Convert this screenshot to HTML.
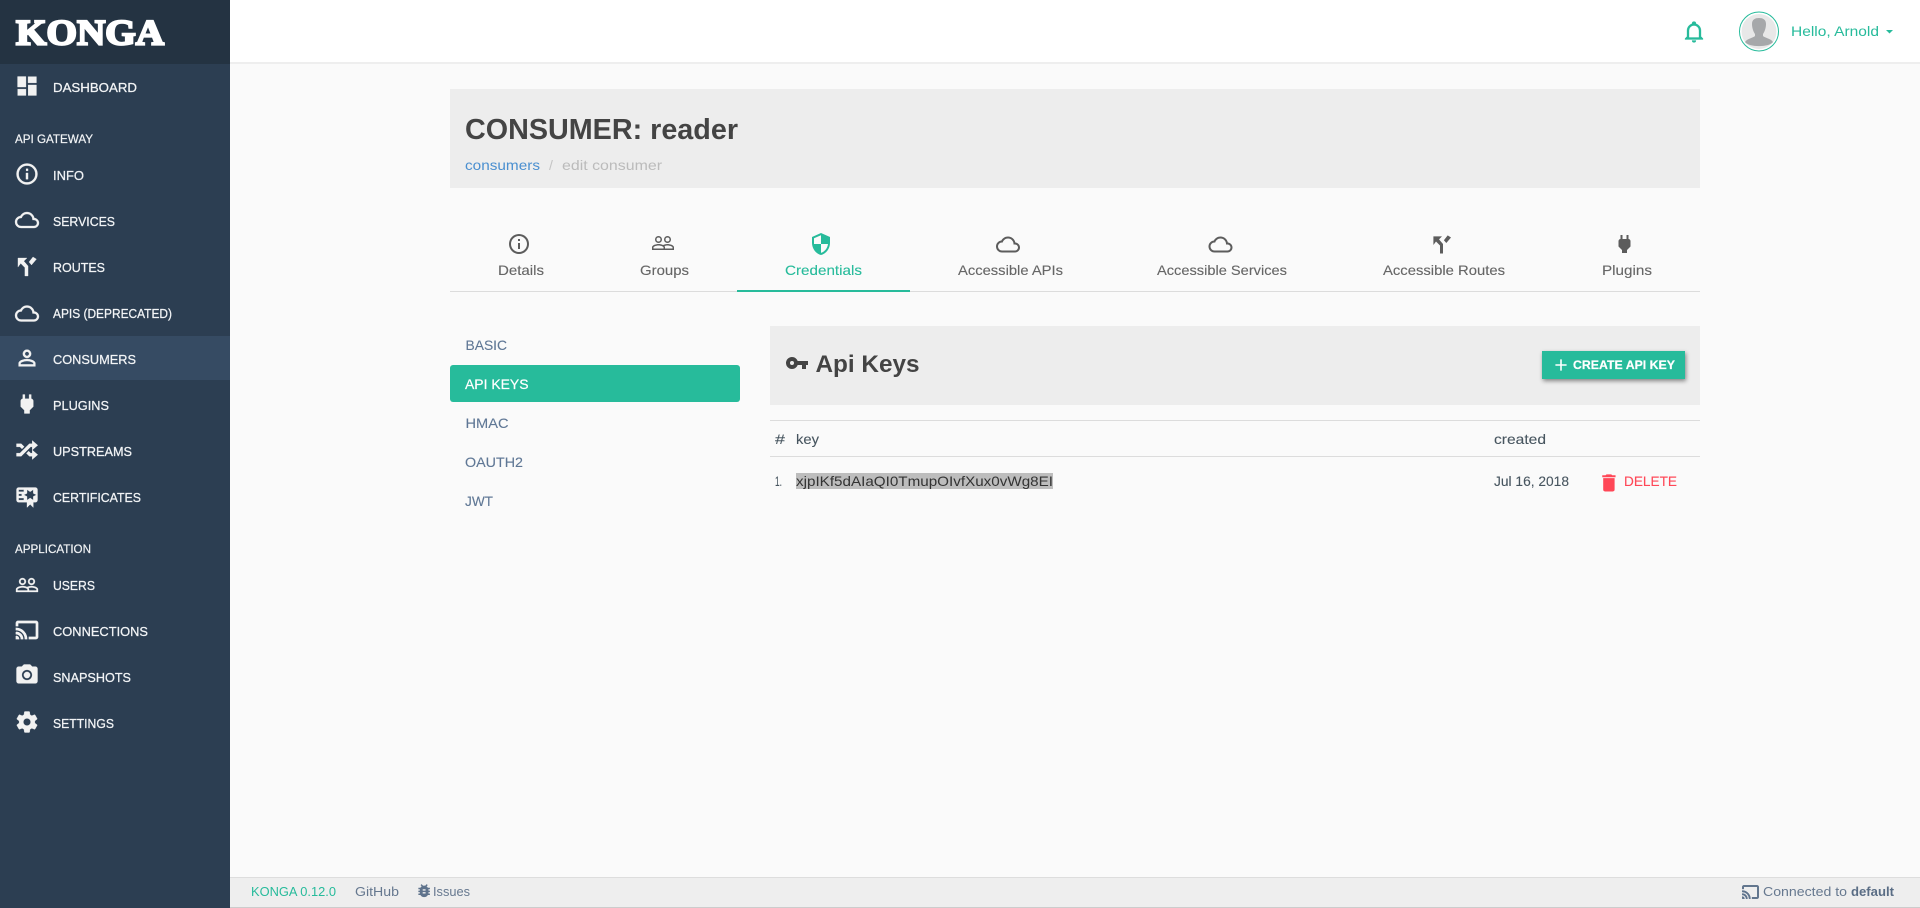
<!DOCTYPE html>
<html lang="en">
<head>
<meta charset="utf-8">
<title>Konga</title>
<style>
html,body{margin:0;padding:0;width:1920px;height:908px;overflow:hidden;background:#fafafa}
svg{display:block}
text{font-family:"Liberation Sans",sans-serif}
.nav{font-size:13px;fill:#f2f4f6;stroke:#f2f4f6;stroke-width:.25px}
.head{font-size:12px;fill:#f2f4f6;stroke:#f2f4f6;stroke-width:.2px}
.ni{fill:#f2f2f2;stroke:#f2f2f2;stroke-width:.3px}
.tab{font-size:14px;fill:#666;stroke:#666;stroke-width:.12px}
.ti{fill:#5c5c5c}
.side{font-size:14px;fill:#5f7795;stroke:#5f7795;stroke-width:.12px}
.td{font-size:14px;fill:#47555f;stroke:#47555f;stroke-width:.1px}
.foot{font-size:13px;fill:#66788f}
</style>
</head>
<body>
<svg xmlns="http://www.w3.org/2000/svg" width="1920" height="908" viewBox="0 0 1920 908">
<defs>
<path id="dash" d="M13,3V9H21V3M13,21H21V11H13M3,21H11V15H3M3,13H11V3H3V13Z"/>
<path id="info" d="M11,9H13V7H11M12,20C7.59,20 4,16.41 4,12C4,7.59 7.59,4 12,4C16.41,4 20,7.59 20,12C20,16.41 16.41,20 12,20M12,2A10,10 0 0,0 2,12A10,10 0 0,0 12,22A10,10 0 0,0 22,12A10,10 0 0,0 12,2M11,17H13V11H11V17Z"/>
<path id="cloud" d="M19,18H6A4,4 0 0,1 2,14A4,4 0 0,1 6,10H6.71C7.37,7.69 9.5,6 12,6A5.5,5.5 0 0,1 17.5,11.5V12H19A3,3 0 0,1 22,15A3,3 0 0,1 19,18M19.35,10.03C18.67,6.59 15.64,4 12,4C9.11,4 6.6,5.64 5.35,8.03C2.34,8.36 0,10.9 0,14A6,6 0 0,0 6,20H19C21.76,20 24,17.76 24,15C24,12.36 21.95,10.22 19.35,10.03Z"/>
<path id="route" d="M3.4,4.4H12L9,7.4L13,12V21.5H10V13.5L6,9.5L3.4,13ZM17.7,3.4L21,5.5L16.3,11L13.9,8.2Z"/>
<path id="plug" d="M16,7V3H14V7H10V3H8V7H8C7,7 6,8 6,9V14.5L9.5,18V21H14.5V18L18,14.5V9C18,8 17,7 16,7Z"/>
<path id="users" d="M16.5,13C15.3,13 13.43,13.34 12,14C10.57,13.33 8.7,13 7.5,13C5.33,13 1,14.08 1,16.25V19H23V16.25C23,14.08 18.67,13 16.5,13M12.5,17.5H2.5V16.25C2.5,15.71 5.06,14.5 7.5,14.5C9.94,14.5 12.5,15.71 12.5,16.25V17.5M21.5,17.5H14V16.25C14,15.79 13.8,15.39 13.47,15.03C14.38,14.72 15.5,14.5 16.5,14.5C18.94,14.5 21.5,15.71 21.5,16.25V17.5M7.5,12A3.5,3.5 0 0,0 11,8.5A3.5,3.5 0 0,0 7.5,5A3.5,3.5 0 0,0 4,8.5A3.5,3.5 0 0,0 7.5,12M7.5,6.5A2,2 0 0,1 9.5,8.5A2,2 0 0,1 7.5,10.5A2,2 0 0,1 5.5,8.5A2,2 0 0,1 7.5,6.5M16.5,12A3.5,3.5 0 0,0 20,8.5A3.5,3.5 0 0,0 16.5,5A3.5,3.5 0 0,0 13,8.5A3.5,3.5 0 0,0 16.5,12M16.5,6.5A2,2 0 0,1 18.5,8.5A2,2 0 0,1 16.5,10.5A2,2 0 0,1 14.5,8.5A2,2 0 0,1 16.5,6.5Z"/>
<path id="cast" d="M21,3H3C1.9,3 1,3.9 1,5V8H3V5H21V19H14V21H21C22.1,21 23,20.1 23,19V5C23,3.9 22.1,3 21,3M1,18V21H4C4,19.34 2.66,18 1,18M1,14V16A5,5 0 0,1 6,21H8C8,17.13 4.87,14 1,14M1,10V12A9,9 0 0,1 10,21H12C12,14.92 7.07,10 1,10Z"/>
</defs>

<!-- page -->
<rect width="1920" height="908" fill="#fafafa"/>

<!-- top bar -->
<rect x="230" y="0" width="1690" height="62" fill="#fff"/>
<rect x="230" y="62" width="1690" height="2" fill="#eee"/>
<path fill="#27bb9b" stroke="#27bb9b" stroke-width=".3" transform="translate(1682,19.500)" d="M10,21H14A2,2 0 0,1 12,23A2,2 0 0,1 10,21M21,19V20H3V19L5,17V11C5,7.9 7.03,5.17 10,4.29C10,4.19 10,4.1 10,4A2,2 0 0,1 12,2A2,2 0 0,1 14,4C14,4.1 14,4.19 14,4.29C16.97,5.17 19,7.9 19,11V17L21,19M17,11A5,5 0 0,0 12,6A5,5 0 0,0 7,11V18H17V11Z"/>
<circle cx="1759" cy="31.500" r="19.500" fill="#fff" stroke="#27bb9b" stroke-width="1"/>
<circle cx="1759" cy="31.500" r="17.500" fill="#e8e8e8"/>
<path fill="#a6a8aa" d="M1752,24C1752,19.500 1755,18 1759,18C1763,18 1766,19.500 1766,24C1766,28 1764.500,32 1763,34V36C1765,38 1771,38.500 1773,42C1769.500,47.500 1748.500,47.500 1745,42C1747,38.500 1753,38 1755,36V34C1753.500,32 1752,28 1752,24Z"/>
<text x="1791" y="36" font-size="14" fill="#27bb9b" textLength="88" lengthAdjust="spacingAndGlyphs">Hello, Arnold</text>
<path fill="#27bb9b" d="M1886,30H1893L1889.500,33.500Z"/>

<!-- sidebar -->
<rect x="0" y="0" width="230" height="908" fill="#2c3e52"/>
<rect x="0" y="0" width="230" height="64" fill="#243342"/>
<text x="16" y="44.500" font-size="36" font-weight="bold" fill="#fff" stroke="#fff" stroke-width="2.200" textLength="148" lengthAdjust="spacingAndGlyphs" style="font-family:'Liberation Serif',serif">KONGA</text>
<rect x="0" y="336" width="230" height="44" fill="#364b63"/>

<use href="#dash" class="ni" transform="translate(14.4,73.4) scale(1.05)"/>
<text class="nav" x="53" y="92" textLength="84" lengthAdjust="spacingAndGlyphs">DASHBOARD</text>
<text class="head" x="15" y="143" textLength="78" lengthAdjust="spacingAndGlyphs">API GATEWAY</text>
<use href="#info" class="ni" transform="translate(14.4,161.400) scale(1.05)"/>
<text class="nav" x="53" y="180" textLength="31" lengthAdjust="spacingAndGlyphs">INFO</text>
<use href="#cloud" class="ni" transform="translate(15,208)"/>
<text class="nav" x="53" y="226" textLength="62" lengthAdjust="spacingAndGlyphs">SERVICES</text>
<use href="#route" class="ni" transform="translate(14.4,253.400) scale(1.05)"/>
<text class="nav" x="53" y="272" textLength="52" lengthAdjust="spacingAndGlyphs">ROUTES</text>
<use href="#cloud" class="ni" transform="translate(15,301.500)"/>
<text class="nav" x="53" y="318" textLength="119" lengthAdjust="spacingAndGlyphs">APIS (DEPRECATED)</text>
<path class="ni" transform="translate(14.4,345.400) scale(1.05)" d="M12,4A4,4 0 0,1 16,8A4,4 0 0,1 12,12A4,4 0 0,1 8,8A4,4 0 0,1 12,4M12,6A2,2 0 0,0 10,8A2,2 0 0,0 12,10A2,2 0 0,0 14,8A2,2 0 0,0 12,6M12,13C14.67,13 20,14.33 20,17V20H4V17C4,14.33 9.33,13 12,13M12,14.9C9.03,14.9 5.9,16.36 5.9,17V18.1H18.1V17C18.1,16.36 14.97,14.9 12,14.9Z"/>
<text class="nav" x="53" y="364" textLength="83" lengthAdjust="spacingAndGlyphs">CONSUMERS</text>
<use href="#plug" class="ni" transform="translate(14.4,391.400) scale(1.05)"/>
<text class="nav" x="53" y="410" textLength="56" lengthAdjust="spacingAndGlyphs">PLUGINS</text>
<path class="ni" transform="translate(14.4,437.400) scale(1.05)" d="M17,3L22.25,7.5L17,12L22.25,16.5L17,21V18H14.26L11.44,15.18L13.56,13.06L15.5,15H17V12L17,9H15.5L6.5,18H2V15H5.26L14.26,6H17V3M2,6H6.5L9.32,8.82L7.2,10.94L5.26,9H2V6Z"/>
<text class="nav" x="53" y="456" textLength="79" lengthAdjust="spacingAndGlyphs">UPSTREAMS</text>
<path class="ni" transform="translate(14.4,484.400) scale(1.05)" d="M4,3C2.89,3 2,3.89 2,5V15A2,2 0 0,0 4,17H12V22L15,19L18,22V17H20A2,2 0 0,0 22,15V8L22,6V5A2,2 0 0,0 20,3H16V3H4M12,5L15,7L18,5V8.5L21,10L18,11.5V15L15,13L12,15V11.5L9,10L12,8.5V5M4,5H9V7H4V5M4,9H7V11H4V9M4,13H9V15H4V13Z"/>
<text class="nav" x="53" y="502" textLength="88" lengthAdjust="spacingAndGlyphs">CERTIFICATES</text>
<text class="head" x="15" y="553" textLength="76" lengthAdjust="spacingAndGlyphs">APPLICATION</text>
<use href="#users" class="ni" transform="translate(15,573)"/>
<text class="nav" x="53" y="590" textLength="42" lengthAdjust="spacingAndGlyphs">USERS</text>
<use href="#cast" class="ni" style="stroke-width:.7px" transform="translate(15,618)"/>
<text class="nav" x="53" y="636" textLength="95" lengthAdjust="spacingAndGlyphs">CONNECTIONS</text>
<path class="ni" transform="translate(14.4,662.400) scale(1.05)" d="M4,4H7L9,2H15L17,4H20A2,2 0 0,1 22,6V18A2,2 0 0,1 20,20H4A2,2 0 0,1 2,18V6A2,2 0 0,1 4,4M12,7A5,5 0 0,0 7,12A5,5 0 0,0 12,17A5,5 0 0,0 17,12A5,5 0 0,0 12,7M12,9A3,3 0 0,1 15,12A3,3 0 0,1 12,15A3,3 0 0,1 9,12A3,3 0 0,1 12,9Z"/>
<text class="nav" x="53" y="682" textLength="78" lengthAdjust="spacingAndGlyphs">SNAPSHOTS</text>
<path class="ni" transform="translate(14.4,709.400) scale(1.05)" d="M12,15.5A3.5,3.5 0 0,1 8.5,12A3.5,3.5 0 0,1 12,8.5A3.5,3.5 0 0,1 15.5,12A3.5,3.5 0 0,1 12,15.5M19.43,12.97C19.47,12.65 19.5,12.33 19.5,12C19.5,11.67 19.47,11.34 19.43,11L21.54,9.37C21.73,9.22 21.78,8.95 21.66,8.73L19.66,5.27C19.54,5.05 19.27,4.96 19.05,5.05L16.56,6.05C16.04,5.66 15.5,5.32 14.87,5.07L14.5,2.42C14.46,2.18 14.25,2 14,2H10C9.75,2 9.54,2.18 9.5,2.42L9.13,5.07C8.5,5.32 7.96,5.66 7.44,6.05L4.95,5.05C4.73,4.96 4.46,5.05 4.34,5.27L2.34,8.73C2.21,8.95 2.27,9.22 2.46,9.37L4.57,11C4.53,11.34 4.5,11.67 4.5,12C4.5,12.33 4.53,12.65 4.57,12.97L2.46,14.63C2.27,14.78 2.21,15.05 2.34,15.27L4.34,18.73C4.46,18.95 4.73,19.03 4.95,18.95L7.44,17.94C7.96,18.34 8.5,18.68 9.13,18.93L9.5,21.58C9.54,21.82 9.75,22 10,22H14C14.25,22 14.46,21.82 14.5,21.58L14.87,18.93C15.5,18.67 16.04,18.34 16.56,17.94L19.05,18.95C19.27,19.03 19.54,18.95 19.66,18.73L21.66,15.27C21.78,15.05 21.73,14.78 21.54,14.63L19.43,12.97Z"/>
<text class="nav" x="53" y="728" textLength="61" lengthAdjust="spacingAndGlyphs">SETTINGS</text>

<!-- page header -->
<rect x="450" y="89" width="1250" height="99" fill="#ededed"/>
<text x="465" y="139" font-size="29" font-weight="bold" fill="#444" textLength="273" lengthAdjust="spacingAndGlyphs">CONSUMER: reader</text>
<text x="465" y="170" font-size="14" fill="#4a8fd0" textLength="75" lengthAdjust="spacingAndGlyphs">consumers</text>
<text x="549" y="170" font-size="14" fill="#c4c4c4">/</text>
<text x="562" y="170" font-size="14" fill="#bbb" textLength="100" lengthAdjust="spacingAndGlyphs">edit consumer</text>

<!-- tabs -->
<rect x="450" y="291" width="1250" height="1" fill="#dcdcdc"/>
<rect x="737" y="290" width="173" height="2" fill="#27bb9b"/>
<use href="#info" class="ti" transform="translate(507,232)"/>
<text class="tab" x="498" y="275" textLength="46" lengthAdjust="spacingAndGlyphs">Details</text>
<use href="#users" class="ti" transform="translate(651,231)"/>
<text class="tab" x="640" y="275" textLength="49" lengthAdjust="spacingAndGlyphs">Groups</text>
<path fill="#27bb9b" transform="translate(809,232)" d="M12,12H19C18.47,16.11 15.72,19.78 12,20.92V12H5V6.3L12,3.19M12,1L3,5V11C3,16.55 6.84,21.73 12,23C17.16,21.73 21,16.55 21,11V5L12,1Z"/>
<text x="785" y="275" font-size="14" fill="#27bb9b" stroke="#27bb9b" stroke-width=".12" textLength="77" lengthAdjust="spacingAndGlyphs">Credentials</text>
<use href="#cloud" class="ti" transform="translate(996,232.500)"/>
<text class="tab" x="958" y="275" textLength="105" lengthAdjust="spacingAndGlyphs">Accessible APIs</text>
<use href="#cloud" class="ti" transform="translate(1208.500,232.500)"/>
<text class="tab" x="1157" y="275" textLength="130" lengthAdjust="spacingAndGlyphs">Accessible Services</text>
<use href="#route" class="ti" transform="translate(1430,232)"/>
<text class="tab" x="1383" y="275" textLength="122" lengthAdjust="spacingAndGlyphs">Accessible Routes</text>
<use href="#plug" class="ti" transform="translate(1612.500,232)"/>
<text class="tab" x="1602" y="275" textLength="50" lengthAdjust="spacingAndGlyphs">Plugins</text>

<!-- side menu -->
<text class="side" x="465.500" y="350" textLength="41.500" lengthAdjust="spacingAndGlyphs">BASIC</text>
<rect x="450" y="365" width="290" height="37" rx="3" fill="#27bb9b"/>
<text x="465" y="389" font-size="14" fill="#fff" stroke="#fff" stroke-width=".2" textLength="63.500" lengthAdjust="spacingAndGlyphs">API KEYS</text>
<text class="side" x="465.500" y="428" textLength="43" lengthAdjust="spacingAndGlyphs">HMAC</text>
<text class="side" x="465" y="467" textLength="58" lengthAdjust="spacingAndGlyphs">OAUTH2</text>
<text class="side" x="465" y="506" textLength="28" lengthAdjust="spacingAndGlyphs">JWT</text>

<!-- panel -->
<rect x="770" y="326" width="930" height="79" fill="#ededed"/>
<path fill="#444" transform="translate(785,351)" d="M7,14A2,2 0 0,1 5,12A2,2 0 0,1 7,10A2,2 0 0,1 9,12A2,2 0 0,1 7,14M12.65,10C11.83,7.67 9.61,6 7,6A6,6 0 0,0 1,12A6,6 0 0,0 7,18C9.61,18 11.83,16.33 12.65,14H17V18H21V14H23V10H12.65Z"/>
<text x="815.500" y="372" font-size="24" font-weight="bold" fill="#444" textLength="104" lengthAdjust="spacingAndGlyphs">Api Keys</text>
<rect x="1542" y="351" width="143" height="28" fill="#27bb9b" style="filter:drop-shadow(1px 2px 2px rgba(0,0,0,.45))"/>
<path fill="#fff" transform="translate(1551.400,355.400) scale(.8)" d="M19,13H13V19H11V13H5V11H11V5H13V11H19V13Z"/>
<text x="1573" y="369" font-size="12" font-weight="bold" fill="#fff" stroke="#fff" stroke-width=".2" textLength="102" lengthAdjust="spacingAndGlyphs">CREATE API KEY</text>

<!-- table -->
<rect x="770" y="420" width="930" height="1" fill="#dcdcdc"/>
<rect x="770" y="456" width="930" height="1" fill="#dcdcdc"/>
<text class="td" x="775" y="444" textLength="10" lengthAdjust="spacingAndGlyphs">#</text>
<text class="td" x="796" y="444" textLength="23" lengthAdjust="spacingAndGlyphs">key</text>
<text class="td" x="1494" y="444" textLength="52" lengthAdjust="spacingAndGlyphs">created</text>
<text class="td" x="775" y="486" textLength="7" lengthAdjust="spacingAndGlyphs">1.</text>
<rect x="796" y="473" width="257" height="16" fill="#bdbdbd"/>
<text x="796" y="486" font-size="14" fill="#333" textLength="257" lengthAdjust="spacingAndGlyphs">xjpIKf5dAIaQI0TmupOIvfXux0vWg8EI</text>
<text class="td" x="1494" y="486" textLength="75" lengthAdjust="spacingAndGlyphs">Jul 16, 2018</text>
<path fill="#ff4757" transform="translate(1597.500,471.500) scale(.95)" d="M19,4H15.5L14.5,3H9.5L8.5,4H5V6H19M6,19A2,2 0 0,0 8,21H16A2,2 0 0,0 18,19V7H6V19Z"/>
<text x="1624" y="486" font-size="14" fill="#ff4757" stroke="#ff4757" stroke-width=".12" textLength="53" lengthAdjust="spacingAndGlyphs">DELETE</text>

<!-- footer -->
<rect x="230" y="877" width="1690" height="31" fill="#eee"/>
<rect x="230" y="877" width="1690" height="1" fill="#ddd"/>
<rect x="230" y="907" width="1690" height="1" fill="#ccc"/>
<text x="251" y="896" font-size="13" fill="#27bb9b" textLength="85" lengthAdjust="spacingAndGlyphs">KONGA 0.12.0</text>
<text class="foot" x="355" y="896" textLength="44" lengthAdjust="spacingAndGlyphs">GitHub</text>
<path fill="#5f738c" transform="translate(415.500,882) scale(.72)" d="M14,12H10V10H14M14,16H10V14H14M20,8H17.19C16.74,7.22 16.12,6.55 15.37,6.04L17,4.41L15.59,3L13.42,5.17C12.96,5.06 12.49,5 12,5C11.51,5 11.04,5.06 10.59,5.17L8.41,3L7,4.41L8.62,6.04C7.88,6.55 7.26,7.22 6.81,8H4V10H6.09C6.04,10.33 6,10.66 6,11V12H4V14H6V15C6,15.34 6.04,15.67 6.09,16H4V18H6.81C7.85,19.79 9.78,21 12,21C14.22,21 16.15,19.79 17.19,18H20V16H17.91C17.96,15.67 18,15.34 18,15V14H20V12H18V11C18,10.66 17.96,10.33 17.91,10H20V8Z"/>
<text class="foot" x="433" y="896" textLength="37" lengthAdjust="spacingAndGlyphs">Issues</text>
<use href="#cast" fill="#5f738c" stroke="#5f738c" stroke-width=".6" transform="translate(1741.500,883) scale(.75)"/>
<text class="foot" x="1763" y="896" textLength="84" lengthAdjust="spacingAndGlyphs">Connected to</text>
<text x="1851" y="896" font-size="13" font-weight="bold" fill="#5a6d85" textLength="43" lengthAdjust="spacingAndGlyphs">default</text>
</svg>
</body>
</html>
